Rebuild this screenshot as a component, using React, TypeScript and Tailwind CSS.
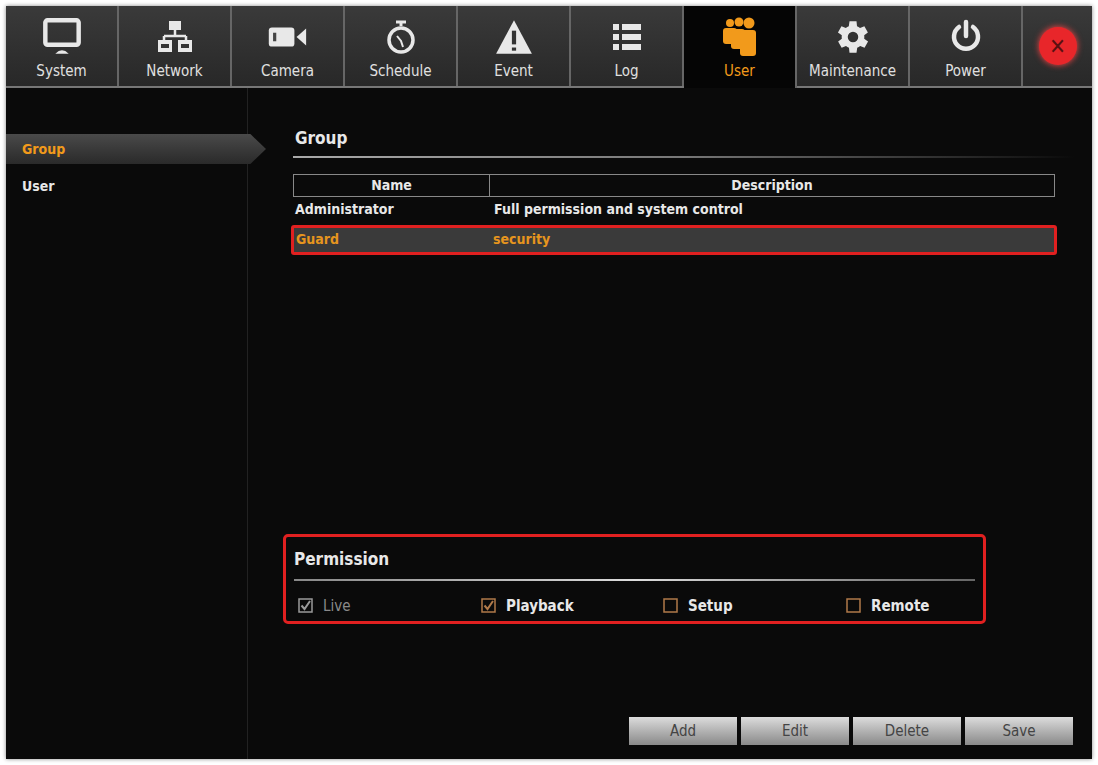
import React from "react";

const F = { fontFamily: '"DejaVu Sans Condensed","DejaVu Sans",sans-serif' };

const W = "#e8e8e8";
const icons: Record<string, React.ReactNode> = {
  System: (
    <svg width="40" height="38" viewBox="0 0 36 34"><rect x="3" y="2" width="30" height="22" rx="2" fill="none" stroke={W} strokeWidth="4" /><path d="M12 32 Q18 26 24 32Z" fill={W} /></svg>
  ),
  Network: (
    <svg width="36" height="38" viewBox="0 0 36 34"><rect x="12" y="1" width="12" height="9" fill={W} /><path d="M18 10v6M7 16h22M7 16v4M29 16v4" stroke={W} strokeWidth="2.5" fill="none" /><rect x="1" y="20" width="14" height="12" fill={W} /><rect x="21" y="20" width="14" height="12" fill={W} /><rect x="4" y="24" width="8" height="4" fill="#333" /><rect x="24" y="24" width="8" height="4" fill="#333" /></svg>
  ),
  Camera: (
    <svg width="44" height="32" viewBox="0 0 40 30"><rect x="2" y="6" width="24" height="18" rx="3" fill={W} /><rect x="6" y="11" width="3" height="8" fill="#444" /><path d="M28 15 L37 7 V23Z" fill={W} /></svg>
  ),
  Schedule: (
    <svg width="34" height="38" viewBox="0 0 34 36"><path d="M12 3h10M17 3v4" stroke={W} strokeWidth="3" /><circle cx="17" cy="21" r="12" fill="none" stroke={W} strokeWidth="3.5" /><path d="M13 17 L17 22 L19 28" stroke={W} strokeWidth="2" fill="none" /></svg>
  ),
  Event: (
    <svg width="40" height="38" viewBox="0 0 38 36"><path d="M19 2 L36 34 H2Z" fill={W} /><rect x="17" y="12" width="4" height="13" fill="#333" /><rect x="17" y="28" width="4" height="3" fill="#333" /></svg>
  ),
  Log: (
    <svg width="34" height="36" viewBox="0 0 34 34">{[4, 14, 24].map(y => (<g key={y}><rect x="3" y={y} width="6" height="6" fill={W} /><rect x="12" y={y} width="19" height="6" fill={W} /></g>))}</svg>
  ),
  User: (
    <svg width="38" height="42" viewBox="0 0 38 40" fill="#f29a1b"><circle cx="9" cy="6" r="4" /><circle cx="18" cy="5" r="4.5" /><circle cx="28" cy="6" r="5.5" /><rect x="2" y="11" width="14" height="16" rx="3" /><rect x="10" y="12" width="14" height="20" rx="3" /><rect x="19" y="13" width="16" height="26" rx="3" /></svg>
  ),
  Maintenance: (
    <svg width="42" height="42" viewBox="0 0 24 24"><path fill={W} d="M19.4 13a7.5 7.5 0 0 0 0-2l2.1-1.6-2-3.5-2.5 1a7 7 0 0 0-1.7-1L15 3h-4l-.4 2.9a7 7 0 0 0-1.7 1l-2.5-1-2 3.5L6.6 11a7.5 7.5 0 0 0 0 2l-2.1 1.6 2 3.5 2.5-1a7 7 0 0 0 1.7 1L11 21h4l.4-2.9a7 7 0 0 0 1.7-1l2.5 1 2-3.5zM13 15a3 3 0 1 1 0-6 3 3 0 0 1 0 6z" transform="translate(-1 0)" /></svg>
  ),
  Power: (
    <svg width="36" height="36" viewBox="0 0 36 36"><path d="M11 8 A12 12 0 1 0 25 8" fill="none" stroke={W} strokeWidth="4.5" strokeLinecap="round" /><path d="M18 3v14" stroke={W} strokeWidth="4.5" strokeLinecap="round" /></svg>
  ),
};

const tabs = ["System", "Network", "Camera", "Schedule", "Event", "Log", "User", "Maintenance", "Power"];

function Check({ checked, label, dim }: { checked: boolean; label: string; dim?: boolean }) {
  const c = dim ? "#9a9a9a" : "#b07a4a";
  return (
    <div className="flex items-center gap-[10px]">
      <svg width="15" height="15" viewBox="0 0 15 15"><rect x="1" y="1" width="13" height="13" fill="none" stroke={c} strokeWidth="1.5" />{checked && <path d="M3.5 7.5 L6.5 11 L12 3" stroke={c} strokeWidth="2" fill="none" />}</svg>
      <span className={`text-[15px] font-bold ${dim ? "text-[#8a8a8a] font-normal" : "text-[#e8e8e8]"}`}>{label}</span>
    </div>
  );
}

export default function App() {
  return (
    <div className="w-[1098px] h-[765px] bg-white p-[6px] pr-[6px]" style={F}>
      <div className="w-full h-full bg-[#0a0a0a] flex flex-col shadow-[0_0_4px_#888]">
        <div className="flex h-[82px] bg-[#0a0a0a] border-b-[2px] border-[#777]">
          {tabs.map(t => {
            const active = t === "User";
            return (
              <div key={t} className={`w-[113px] shrink-0 flex flex-col items-center justify-end pb-[6px] gap-[2px] border-r-[2px] border-[#666] ${active ? "bg-[#050505] -mb-[2px] pb-[8px]" : "bg-gradient-to-b from-[#3a3a3a] to-[#282828]"}`}>
                <div className="h-[46px] flex items-center">{icons[t]}</div>
                <span className={`text-[15px] leading-[18px] ${active ? "text-[#f29a1b]" : "text-[#e0e0e0]"}`}>{t}</span>
              </div>
            );
          })}
          <div className="flex-1 bg-gradient-to-b from-[#3a3a3a] to-[#282828] flex items-center justify-center">
            <div className="w-[38px] h-[38px] rounded-full bg-[#e8262a] shadow-[0_0_6px_#f44] flex items-center justify-center text-[#5a1010] text-[22px] font-bold">✕</div>
          </div>
        </div>
        <div className="flex flex-1">
          <div className="w-[242px] border-r border-[#222] pt-[46px]">
            <div className="relative h-[30px] w-[260px]">
              <div className="h-full bg-gradient-to-b from-[#4a4a4a] to-[#2a2a2a] flex items-center pl-[16px] text-[#f29a1b] text-[14px] font-bold" style={{ clipPath: "polygon(0 0, 94% 0, 100% 50%, 94% 100%, 0 100%)" }}>Group</div>
            </div>
            <div className="pl-[16px] mt-[12px] text-[#e8e8e8] text-[14px] font-bold">User</div>
          </div>
          <div className="flex-1 flex flex-col pl-[45px] pr-[17px] pt-[38px] pb-[14px]">
            <div className="text-[#e8e8e8] text-[17px] font-bold pl-[2px]">Group</div>
            <div className="h-[2px] mt-[4px] bg-gradient-to-r from-[#aaa] via-[#777] to-transparent" />
            <div className="mt-[16px] mr-[20px] text-[14px] font-bold text-[#e8e8e8]">
              <div className="flex h-[23px] border border-[#888]">
                <div className="w-[196px] border-r border-[#888] text-center">Name</div>
                <div className="flex-1 text-center">Description</div>
              </div>
              <div className="flex h-[26px] items-center">
                <div className="w-[197px] pl-[2px]">Administrator</div>
                <div className="flex-1 pl-[4px]">Full permission and system control</div>
              </div>
              <div className="flex h-[30px] items-center border-[3px] border-[#e02020] rounded-[3px] bg-[#3a3a3a] text-[#e6951e] -ml-[2px] -mr-[2px] mt-[2px]">
                <div className="w-[197px] pl-[2px]">Guard</div>
                <div className="flex-1 pl-[2px]">security</div>
              </div>
            </div>
            <div className="flex-1" />
            <div className="-ml-[10px] w-[703px] h-[90px] border-[3px] border-[#e02020] rounded-[5px] pl-[8px] pr-[8px] pt-[10px]">
              <div className="text-[#e8e8e8] text-[17px] font-bold">Permission</div>
              <div className="h-[2px] mt-[6px] bg-gradient-to-r from-[#888] via-[#ddd] to-[#666]" />
              <div className="flex mt-[14px] pl-[4px]">
                <div className="w-[183px]"><Check checked dim label="Live" /></div>
                <div className="w-[182px]"><Check checked label="Playback" /></div>
                <div className="w-[183px]"><Check checked={false} label="Setup" /></div>
                <Check checked={false} label="Remote" />
              </div>
            </div>
            <div className="h-[121px] flex items-end justify-end gap-[4px] mr-[2px]">
              {["Add", "Edit", "Delete", "Save"].map(b => (
                <div key={b} className="w-[108px] h-[28px] bg-gradient-to-b from-[#dcdcdc] to-[#8a8a8a] flex items-center justify-center text-[#444] text-[15px]">{b}</div>
              ))}
            </div>
          </div>
        </div>
      </div>
    </div>
  );
}
